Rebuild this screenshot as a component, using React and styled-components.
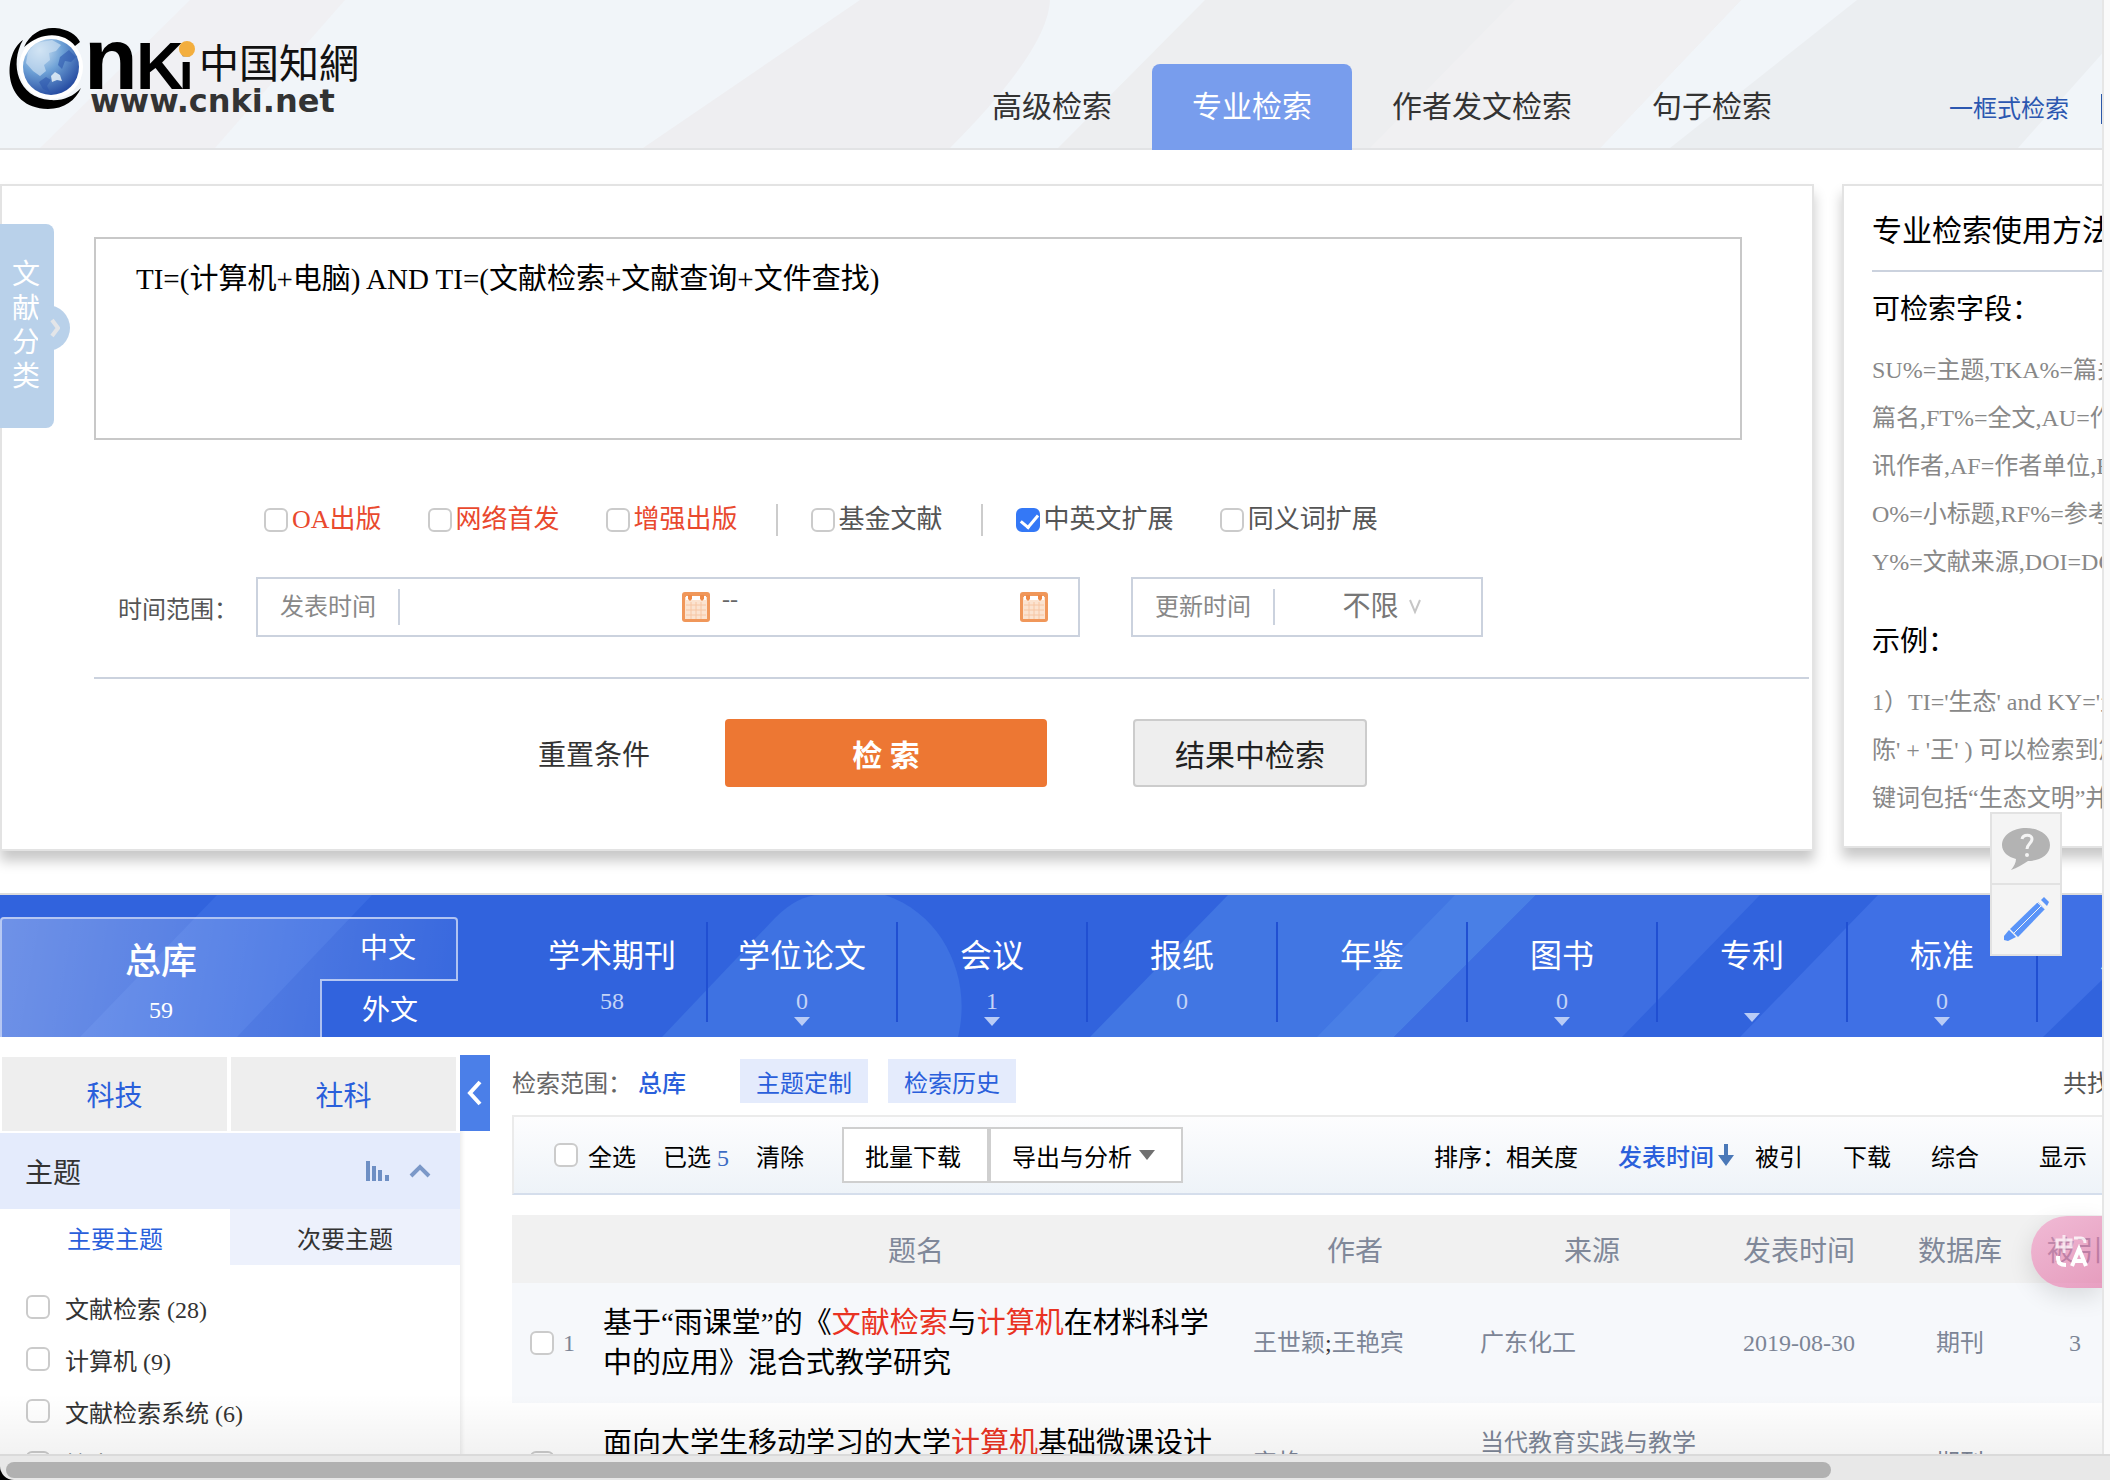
import React from 'react';
import styled, { createGlobalStyle } from 'styled-components';

const navItems = [
  { name: '学术期刊', count: '58' },
  { name: '学位论文', count: '0', more: true },
  { name: '会议', count: '1', more: true },
  { name: '报纸', count: '0' },
  { name: '年鉴', count: '' },
  { name: '图书', count: '0', more: true },
  { name: '专利', count: '', more: true },
  { name: '标准', count: '0', more: true },
  { name: '成果', count: '' },
];

const topics = ['文献检索 (28)', '计算机 (9)', '文献检索系统 (6)', '检索课 (5)'];

const fieldLines = [
  'SU%=主题,TKA%=篇关摘,KY=关键词,TI=',
  '篇名,FT%=全文,AU=作者,FI=第一作者,RP=通',
  '讯作者,AF=作者单位,FU=基金,AB=摘要,C',
  'O%=小标题,RF%=参考文献,CLC=分类号,L',
  'Y%=文献来源,DOI=DOI,CF=被引频次',
];

const exampleLines = [
  "1）TI='生态' and KY='生态文明' and (AU % '",
  "陈' + '王' ) 可以检索到篇名包括“生态”并且关",
  '键词包括“生态文明”并且作者为“陈”姓和“王”姓',
];

export default function App() {
  return (
    <>
      <GlobalStyle />
      <Window>
        <Body>
          <View>
            <Page>
              <TopBar />
              <SearchArea />
              <DatabaseNav />
              <Lower>
                <TopicSidebar />
                <Collapse type="button" aria-label="收起">
                  <svg width="18" height="26" viewBox="0 0 18 26" fill="none">
                    <path d="M14 2L4 13l10 11" stroke="#fff" strokeWidth="4" />
                  </svg>
                </Collapse>
                <Results />
              </Lower>
            </Page>
            <BottomShade />
            <FloatTools />
            <TranslateBadge />
          </View>
          <Track />
        </Body>
        <ScrollBar>
          <Thumb />
        </ScrollBar>
      </Window>
    </>
  );
}

function TopBar() {
  return (
    <Header>
      <HeaderArt viewBox="0 0 2412 148" preserveAspectRatio="xMinYMin slice">
        <path d="M190 0H345L215 148H40z" fill="#f0f0f3" />
        <path d="M860 0H1050Q1048 50 950 148H643z" fill="#eeeef1" />
        <path d="M1205 0H1741L1600 148H1058z" fill="#edeef0" />
        <path d="M1515 0H1741L1600 148H1370z" fill="#f0f0f2" />
        <path d="M1857 0H2150L2018 148H1670z" fill="#ebeef1" />
      </HeaderArt>
      <Logo />
      <TopNav>
        <TopTab href="#">高级检索</TopTab>
        <TopTab href="#" $active>专业检索</TopTab>
        <TopTab href="#">作者发文检索</TopTab>
        <TopTab href="#">句子检索</TopTab>
      </TopNav>
      <SimpleLink href="#">一框式检索</SimpleLink>
    </Header>
  );
}

function Logo() {
  return (
    <LogoSvg width="364" height="92" viewBox="0 0 364 92" role="img" aria-label="中国知网">
      <defs>
        <radialGradient id="globe" cx="0.3" cy="0.2" r="0.9">
          <stop offset="0" stopColor="#d5e8f6" />
          <stop offset="0.45" stopColor="#6ea1d6" />
          <stop offset="1" stopColor="#1d419b" />
        </radialGradient>
      </defs>
      <circle cx="51" cy="47" r="32" fill="#fff" />
      <circle cx="51" cy="47" r="28" fill="url(#globe)" />
      <path
        d="M28 32l8-9 16-3 9 5-5 6-7 2 1 7-6 5 2 6-6 5-7-5-7-8z"
        fill="#cfe2f3"
        opacity="0.65"
      />
      <path d="M60 37l9-7 7 7-5 5-6-1-3 8-4-4zM39 62l7-5 5 3-4 6 3 6-7-3z" fill="#2d56ad" opacity="0.6" />
      <path d="M51 56l4-4 5 3 2 6-5-1-5 2z" fill="#e6f1f8" opacity="0.85" />
      <path
        d="M23 20C3 33 1 88 48 89C64 89 76 80 81 68C73 77 62 81 50 80C18 78 9 44 23 20z"
        fill="#000"
      />
      <path d="M24 27C30 13 43 7 55 8C68 9 77 15 80 22L75 26C65 13 43 10 24 27z" fill="#000" />
      <LogoLatin x="84" y="69" fontSize="88">n</LogoLatin>
      <LogoLatin x="136" y="69" fontSize="66" $narrow>K</LogoLatin>
      <LogoLatin x="179" y="69" fontSize="52">i</LogoLatin>
      <circle cx="187" cy="29" r="8" fill="#f3ae3d" />
      <LogoChinese x="199" y="58" fontSize="40">中国知網</LogoChinese>
      <LogoUrl x="90" y="92" fontSize="32">www.cnki.net</LogoUrl>
    </LogoSvg>
  );
}

function SearchArea() {
  return (
    <SearchWrap>
      <SearchPanel>
        <CategoryTab type="button">
          {['文', '献', '分', '类'].map((c) => (
            <span key={c}>{c}</span>
          ))}
          <CategoryKnob>
            <svg width="10" height="20" viewBox="0 0 10 20" fill="none">
              <path d="M2 2l6 8-6 8" stroke="#e3e5e8" strokeWidth="4" />
            </svg>
          </CategoryKnob>
        </CategoryTab>
        <QueryBox
          aria-label="检索式"
          defaultValue="TI=(计算机+电脑) AND TI=(文献检索+文献查询+文件查找)"
          spellCheck={false}
        />
        <Options>
          <Option $red><Check type="checkbox" />OA出版</Option>
          <Option $red><Check type="checkbox" />网络首发</Option>
          <Option $red><Check type="checkbox" />增强出版</Option>
          <Split />
          <Option><Check type="checkbox" />基金文献</Option>
          <Split />
          <Option><Check type="checkbox" defaultChecked />中英文扩展</Option>
          <Option><Check type="checkbox" />同义词扩展</Option>
        </Options>
        <TimeRow>
          <TimeTitle>时间范围：</TimeTitle>
          <DateGroup>
            <GroupLabel htmlFor="date-from">发表时间</GroupLabel>
            <DateInput id="date-from" type="text" />
            <CalendarIcon />
            <Dash>--</Dash>
            <DateInput type="text" aria-label="结束时间" />
            <CalendarIcon />
          </DateGroup>
          <UpdateGroup>
            <GroupLabel htmlFor="update-time">更新时间</GroupLabel>
            <SelectWrap>
              <UpdateSelect id="update-time">
                <option>不限</option>
              </UpdateSelect>
              <svg width="14" height="16" viewBox="0 0 14 16" fill="none">
                <path d="M2 1l5 12 5-12" stroke="#c6c6c6" strokeWidth="2" />
              </svg>
            </SelectWrap>
          </UpdateGroup>
        </TimeRow>
        <Rule />
        <Actions>
          <ResetButton type="button">重置条件</ResetButton>
          <SearchButton type="button">检 索</SearchButton>
          <WithinButton type="button">结果中检索</WithinButton>
        </Actions>
      </SearchPanel>
      <HelpPanel>
        <HelpTitle>专业检索使用方法：</HelpTitle>
        <HelpHeading>可检索字段：</HelpHeading>
        <HelpText>
          {fieldLines.map((line) => (
            <HelpLine key={line}>{line}</HelpLine>
          ))}
        </HelpText>
        <HelpHeading>示例：</HelpHeading>
        <HelpText>
          {exampleLines.map((line) => (
            <HelpLine key={line}>{line}</HelpLine>
          ))}
        </HelpText>
      </HelpPanel>
    </SearchWrap>
  );
}

function CalendarIcon() {
  return (
    <svg width="28" height="30" viewBox="0 0 28 30">
      <rect width="28" height="30" rx="3" fill="#f0975a" />
      <rect x="3" y="5" width="22" height="22" fill="#fbe3d0" />
      <path d="M4 4h20v4H4z" fill="#fff" />
      <path d="M6 3h4v4L8 9 6 7zM18 3h4v4l-2 2-2-2z" fill="#ee8a48" />
      <path d="M4 13h20M4 18h20M4 23h20M9 10v17M14 10v17M19 10v17" stroke="#f6c6a4" strokeWidth="1" />
    </svg>
  );
}

function DatabaseNav() {
  return (
    <DbNav>
      <DbArt viewBox="0 0 2412 142" preserveAspectRatio="xMinYMin slice">
        <path d="M217 0H372L237 142H80z" fill="#3a6ce2" />
        <path d="M662 142L775 23Q798 0 820 0H885C945 20 972 85 958 142z" fill="#3e72e2" />
        <path d="M1228 0H1536L1394 142H1090z" fill="#4176e3" />
        <path d="M1455 0H1536L1394 142H1317z" fill="#497fe6" />
        <path d="M1536 0H1760L1622 142H1394z" fill="#3d6ee2" />
        <path d="M1878 0H2190L2043 142H1740z" fill="#3f70e5" />
      </DbArt>
      <TotalBox>
        <TotalMain href="#">
          <TotalName>总库</TotalName>
          <TotalCount>59</TotalCount>
        </TotalMain>
        <LangCol>
          <LangLink href="#" $on>中文</LangLink>
          <LangLink href="#">外文</LangLink>
        </LangCol>
      </TotalBox>
      <DbList>
        {navItems.map((item) => (
          <DbItem href="#" key={item.name}>
            <DbName>{item.name}</DbName>
            <DbCount>{item.count}</DbCount>
            {item.more && <DbArrow />}
          </DbItem>
        ))}
      </DbList>
    </DbNav>
  );
}

function TopicSidebar() {
  return (
    <Aside>
      <Subjects>
        <SubjectButton type="button">科技</SubjectButton>
        <SubjectButton type="button">社科</SubjectButton>
      </Subjects>
      <GroupHead>
        <GroupName>主题</GroupName>
        <svg width="24" height="20" viewBox="0 0 24 20" fill="#6e8fc4">
          <path d="M0 0h4v20H0zM6 5h4v15H6zM12 9h4v11h-4zM19 14h4v6h-4z" />
        </svg>
        <svg width="22" height="14" viewBox="0 0 22 14" fill="none">
          <path d="M2 12l9-9 9 9" stroke="#7b98c8" strokeWidth="4" />
        </svg>
      </GroupHead>
      <TopicTabs>
        <TopicTab type="button" $active>主要主题</TopicTab>
        <TopicTab type="button">次要主题</TopicTab>
      </TopicTabs>
      <TopicList>
        {topics.map((topic) => (
          <TopicItem key={topic}>
            <Check type="checkbox" />
            {topic}
          </TopicItem>
        ))}
      </TopicList>
    </Aside>
  );
}

function Results() {
  return (
    <Main>
      <ScopeRow>
        <ScopeLabel>检索范围：</ScopeLabel>
        <ScopeValue>总库</ScopeValue>
        <Chip type="button">主题定制</Chip>
        <Chip type="button">检索历史</Chip>
        <Found>共找到 59 条结果</Found>
      </ScopeRow>
      <Toolbar>
        <SelectAll><Check type="checkbox" />全选</SelectAll>
        <Picked>已选 <PickedCount>5</PickedCount></Picked>
        <PlainButton type="button">清除</PlainButton>
        <BatchGroup>
          <BatchButton type="button">批量下载</BatchButton>
          <BatchButton type="button">
            导出与分析
            <svg width="16" height="10" viewBox="0 0 16 10" fill="#707070">
              <path d="M0 0h16L8 10z" />
            </svg>
          </BatchButton>
        </BatchGroup>
        <Sorts>
          <span>排序：</span>
          <PlainButton type="button">相关度</PlainButton>
          <SortActive type="button">
            发表时间
            <svg width="16" height="22" viewBox="0 0 16 22" fill="#4a78b8">
              <path d="M6 0h4v11h6l-8 11-8-11h6z" />
            </svg>
          </SortActive>
          <PlainButton type="button">被引</PlainButton>
          <PlainButton type="button">下载</PlainButton>
          <PlainButton type="button">综合</PlainButton>
          <ShowCount>显示<span>20</span></ShowCount>
        </Sorts>
      </Toolbar>
      <Table>
        <colgroup>
          <Col $w={81} />
          <Col $w={646} />
          <Col $w={232} />
          <Col $w={242} />
          <Col $w={172} />
          <Col $w={150} />
          <Col $w={80} />
          <col />
        </colgroup>
        <thead>
          <tr>
            <Th />
            <Th>题名</Th>
            <Th>作者</Th>
            <Th>来源</Th>
            <Th>发表时间</Th>
            <Th>数据库</Th>
            <Th>被引</Th>
            <Th>下载</Th>
          </tr>
        </thead>
        <tbody>
          <Row $tint>
            <NumCell><RowLabel><Check type="checkbox" />1</RowLabel></NumCell>
            <TitleCell>
              <TitleLink href="#">
                基于“雨课堂”的《<Hit>文献检索</Hit>与<Hit>计算机</Hit>在材料科学中的应用》混合式教学研究
              </TitleLink>
            </TitleCell>
            <AuthorCell>王世颖<Semi>;</Semi>王艳宾</AuthorCell>
            <SourceCell>广东化工</SourceCell>
            <Cell>2019-08-30</Cell>
            <Cell>期刊</Cell>
            <Cell>3</Cell>
            <Cell />
          </Row>
          <Row>
            <NumCell><RowLabel><Check type="checkbox" /></RowLabel></NumCell>
            <TitleCell>
              <TitleLink href="#">
                面向大学生移动学习的大学<Hit>计算机</Hit>基础微课设计与应用
              </TitleLink>
            </TitleCell>
            <AuthorCell>宋艳</AuthorCell>
            <SourceCell>当代教育实践与教学研究</SourceCell>
            <Cell />
            <Cell>期刊</Cell>
            <Cell />
            <Cell />
          </Row>
        </tbody>
      </Table>
    </Main>
  );
}

function FloatTools() {
  return (
    <Tools>
      <ToolButton type="button" aria-label="帮助">
        <svg width="48" height="44" viewBox="0 0 48 44">
          <path
            d="M24 1C37 1 48 8 48 18S38 34 26 34C21 37 15 41 9 43c3-4 5-7 5-11C6 30 0 25 0 18 0 8 11 1 24 1z"
            fill="#b3b3b3"
          />
          <path
            d="M20 12c1-5 10-5 10 0 0 4-5 5-5 10"
            stroke="#f4f4f4"
            strokeWidth="3"
            fill="none"
          />
          <circle cx="25" cy="28" r="2" fill="#f4f4f4" />
        </svg>
      </ToolButton>
      <ToolButton type="button" aria-label="反馈">
        <svg width="48" height="48" viewBox="0 0 48 48">
          <path d="M36 6l7 7-27 28-8-8z" fill="#5a94f8" />
          <path d="M39 4l3-3 5 5-2 4z" fill="#5a94f8" />
          <path d="M7 34l7 7-8 4-4-1 0-4z" fill="#5a94f8" />
          <path d="M39 10L12 37M35 6l9 8" stroke="#f4f4f4" strokeWidth="1" />
        </svg>
      </ToolButton>
    </Tools>
  );
}

function TranslateBadge() {
  return (
    <Badge type="button" aria-label="翻译">
      <svg width="36" height="36" viewBox="0 0 36 36" fill="none" stroke="#fff" strokeWidth="3">
        <path d="M3 6h14v7H3zM10 1v18" opacity="0.7" />
        <path d="M20 4h7q4 0 4 5" opacity="0.8" />
        <path d="M4 22v3q0 6 8 6" strokeWidth="4" />
        <path d="M18 32l7-17 7 17M20 27h10" strokeWidth="4" />
      </svg>
    </Badge>
  );
}

const GlobalStyle = createGlobalStyle`
  * {
    box-sizing: border-box;
  }
  body {
    margin: 0;
    background: #fff;
    overflow: hidden;
  }
  body, button, input, select, textarea {
    font-family: "Liberation Serif", "Noto Sans CJK SC", serif;
    font-size: 24px;
  }
  button {
    padding: 0;
    border: none;
    background: none;
    color: inherit;
    cursor: pointer;
  }
  a {
    color: inherit;
    text-decoration: none;
  }
`;
const Window = styled.div`
  height: 100vh;
  display: flex;
  flex-direction: column;
  background: #fff;
`;
const Body = styled.div`
  flex: 1;
  min-height: 0;
  display: flex;
`;
const View = styled.div`
  flex: 1;
  min-width: 0;
  position: relative;
  overflow: hidden;
`;
const Page = styled.div`
  min-width: 2412px;
`;
const Track = styled.div`
  width: 8px;
  border-left: 2px solid #e6e6e6;
  background: #fafafa;
`;
const ScrollBar = styled.div`
  height: 26px;
  padding: 6px 6px 2px;
  border-top: 2px solid #dadada;
  border-bottom-left-radius: 14px;
  background: #e8e8e8;
  box-shadow: -8px 8px 0 8px #000;
`;
const Thumb = styled.div`
  width: 87%;
  height: 16px;
  border-radius: 8px;
  background: #b1b1b1;
`;
const BottomShade = styled.div`
  position: absolute;
  left: 0;
  right: 0;
  bottom: 0;
  height: 60px;
  pointer-events: none;
  background: linear-gradient(rgba(0, 0, 0, 0), rgba(0, 0, 0, 0.05));
`;

/* header */
const Header = styled.header`
  position: relative;
  height: 150px;
  display: flex;
  align-items: flex-end;
  background: #f1f5f9;
`;
const HeaderArt = styled.svg`
  position: absolute;
  left: 0;
  top: 0;
  width: 100%;
  height: 150px;
  border-bottom: 2px solid #e2e3e5;
`;
const LogoSvg = styled.svg`
  position: relative;
  align-self: flex-start;
  margin-top: 20px;
  overflow: visible;
`;
const LogoLatin = styled.text`
  font-family: ${(p) => (p.$narrow ? '"Liberation Sans Narrow", ' : '')}"Liberation Sans", sans-serif;
  font-weight: 700;
`;
const LogoChinese = styled.text`
  font-family: "Noto Sans CJK SC", sans-serif;
  fill: #111;
`;
const LogoUrl = styled.text`
  font-family: "DejaVu Sans", sans-serif;
  font-weight: 700;
  fill: #333;
`;
const TopNav = styled.nav`
  position: relative;
  display: flex;
  margin-left: 588px;
`;
const TopTab = styled.a`
  height: 86px;
  padding: 0 40px;
  border-radius: 8px 8px 0 0;
  font-size: 30px;
  line-height: 86px;
  color: ${(p) => (p.$active ? '#fff' : '#333')};
  background: ${(p) => (p.$active ? '#789ded' : 'none')};
`;
const SimpleLink = styled.a`
  position: relative;
  margin: 0 0 26px 137px;
  padding-right: 32px;
  border-right: 2px solid #2b57a8;
  font-size: 24px;
  line-height: 30px;
  color: #2b57b0;
`;

/* search form */
const SearchWrap = styled.section`
  display: flex;
  gap: 28px;
  padding: 34px 0 42px;
`;
const panelShadow = '0 10px 12px rgba(0, 0, 0, 0.22)';
const SearchPanel = styled.form`
  position: relative;
  flex: 1;
  padding: 51px 3px 60px 92px;
  border: 2px solid #e3e3e3;
  box-shadow: ${panelShadow};
`;
const CategoryTab = styled.button`
  position: absolute;
  left: -2px;
  top: 38px;
  width: 54px;
  height: 204px;
  padding-right: 2px;
  display: flex;
  flex-direction: column;
  align-items: center;
  justify-content: center;
  border-radius: 0 8px 8px 0;
  background: #b9d1ea;
  color: #fff;
  font-size: 28px;
  line-height: 34px;
`;
const CategoryKnob = styled.span`
  position: absolute;
  right: -16px;
  top: 81px;
  width: 32px;
  height: 46px;
  padding-left: 12px;
  display: flex;
  align-items: center;
  border-radius: 0 24px 24px 0;
  background: #b9d1ea;
`;
const QueryBox = styled.textarea`
  display: block;
  width: calc(100% - 67px);
  height: 203px;
  padding: 20px 40px;
  border: 2px solid #c8c8c8;
  outline: none;
  resize: none;
  font-size: 29px;
  line-height: 40px;
  color: #000;
`;
const Options = styled.div`
  display: flex;
  align-items: center;
  margin: 64px 0 0 170px;
  height: 32px;
`;
const Option = styled.label`
  display: flex;
  align-items: center;
  gap: 4px;
  font-size: 26px;
  line-height: 32px;
  color: ${(p) => (p.$red ? '#e9492e' : '#555')};
  & + & {
    margin-left: 46px;
  }
`;
const Check = styled.input`
  position: relative;
  flex: none;
  appearance: none;
  width: 24px;
  height: 24px;
  margin: 0;
  border: 2px solid #cbcbcb;
  border-radius: 6px;
  background: #fff;
  &:checked {
    border-color: #3478f6;
    background: #3478f6;
  }
  &:checked::after {
    content: '';
    position: absolute;
    left: 6px;
    top: 1px;
    width: 8px;
    height: 14px;
    border: solid #fff;
    border-width: 0 3px 3px 0;
    transform: rotate(40deg);
  }
`;
const Split = styled.span`
  width: 2px;
  height: 32px;
  margin: 0 33px 0 38px;
  background: #ccc;
`;
const TimeRow = styled.div`
  display: flex;
  align-items: center;
  margin: 41px 0 40px 24px;
`;
const TimeTitle = styled.span`
  width: 138px;
  color: #555;
`;
const TimeGroup = styled.div`
  display: flex;
  align-items: center;
  height: 60px;
  border: 2px solid #cbd2de;
`;
const DateGroup = styled(TimeGroup)`
  width: 824px;
  padding-right: 30px;
`;
const UpdateGroup = styled(TimeGroup)`
  width: 352px;
  margin-left: 51px;
`;
const GroupLabel = styled.label`
  flex: none;
  width: 142px;
  padding-left: 22px;
  border-right: 2px solid #cbd2de;
  line-height: 36px;
  color: #888;
`;
const DateInput = styled.input`
  flex: 1;
  min-width: 0;
  height: 40px;
  padding: 0 20px;
  border: none;
  outline: none;
  background: none;
`;
const Dash = styled.span`
  padding: 0 0 16px 12px;
  color: #666;
`;
const SelectWrap = styled.div`
  flex: 1;
  display: flex;
  align-items: center;
  justify-content: center;
  gap: 8px;
  padding-left: 8px;
`;
const UpdateSelect = styled.select`
  appearance: none;
  padding: 0;
  border: none;
  outline: none;
  background: none;
  font-size: 28px;
  line-height: 40px;
  color: #777;
`;
const Rule = styled.div`
  height: 2px;
  background: #cbd2de;
`;
const Actions = styled.div`
  display: flex;
  align-items: center;
  margin: 40px 0 2px 444px;
  height: 68px;
`;
const ResetButton = styled.button`
  font-size: 28px;
  color: #333;
`;
const SearchButton = styled.button`
  width: 322px;
  height: 68px;
  margin: 0 86px 0 75px;
  border-radius: 4px;
  background: #ed7733;
  font-size: 30px;
  font-weight: 700;
  color: #fff;
`;
const WithinButton = styled.button`
  width: 234px;
  height: 68px;
  border: 2px solid #ccc;
  border-radius: 4px;
  background: #eee;
  font-size: 30px;
  color: #222;
`;
const HelpPanel = styled.section`
  width: 570px;
  margin-bottom: 3px;
  padding: 20px 28px;
  border: 2px solid #e3e3e3;
  box-shadow: ${panelShadow};
`;
const HelpTitle = styled.h2`
  margin: 0;
  padding-bottom: 14px;
  border-bottom: 2px solid #cbd2de;
  font-size: 30px;
  font-weight: 400;
  line-height: 50px;
`;
const HelpHeading = styled.h3`
  margin: 18px 0 16px;
  font-size: 28px;
  font-weight: 400;
  line-height: 40px;
`;
const HelpText = styled.div`
  margin-bottom: 36px;
  color: #888;
  &:last-child {
    margin-bottom: 0;
  }
`;
const HelpLine = styled.div`
  line-height: 48px;
  white-space: nowrap;
`;

/* database nav */
const DbNav = styled.nav`
  position: relative;
  height: 144px;
  display: flex;
  border-top: 2px solid #dcdcdc;
  background: #3163dd;
  color: #fff;
  overflow: hidden;
`;
const DbArt = styled.svg`
  position: absolute;
  left: 0;
  top: 0;
  width: 100%;
  height: 142px;
`;
const TotalBox = styled.div`
  position: relative;
  width: 458px;
  margin-top: 22px;
  display: flex;
  border-radius: 4px 4px 0 0;
  background: linear-gradient(100deg, rgba(255, 255, 255, 0.3), rgba(255, 255, 255, 0.03));
`;
const TotalMain = styled.a`
  flex: 1;
  display: flex;
  flex-direction: column;
  align-items: center;
  padding-top: 18px;
  border: solid rgba(255, 255, 255, 0.5);
  border-width: 2px 0 0 2px;
  border-top-left-radius: 4px;
`;
const TotalName = styled.span`
  font-size: 36px;
  font-weight: 500;
  line-height: 50px;
`;
const TotalCount = styled.span`
  font-size: 24px;
  line-height: 46px;
`;
const LangCol = styled.div`
  width: 138px;
  display: flex;
  flex-direction: column;
`;
const LangLink = styled.a`
  flex: 1;
  border: solid rgba(255, 255, 255, 0.6);
  border-width: ${(p) => (p.$on ? '2px 2px 2px 0' : '0 0 0 2px')};
  border-top-right-radius: ${(p) => (p.$on ? '4px' : '0')};
  background: ${(p) => (p.$on ? 'none' : '#3163dd')};
  font-size: 28px;
  line-height: 60px;
  text-align: center;
`;
const DbList = styled.div`
  position: relative;
  display: flex;
  margin-left: 60px;
  padding-top: 27px;
`;
const DbItem = styled.a`
  width: 190px;
  height: 100px;
  display: flex;
  flex-direction: column;
  align-items: center;
  padding-top: 12px;
  border-right: 2px solid #204fd2;
`;
const DbName = styled.span`
  font-size: 32px;
  line-height: 44px;
`;
const DbCount = styled.span`
  height: 39px;
  font-size: 24px;
  line-height: 46px;
  color: #c4d3f7;
`;
const DbArrow = styled.span`
  border: solid transparent;
  border-width: 9px 8px 0;
  border-top-color: #b9ccf6;
`;

/* lower area */
const Lower = styled.div`
  display: flex;
  align-items: flex-start;
`;
const Aside = styled.aside`
  width: 460px;
  padding-top: 20px;
  box-shadow: 2px 22px 4px rgba(0, 0, 0, 0.08);
`;
const Subjects = styled.div`
  display: flex;
  gap: 4px;
  padding: 0 4px 2px 2px;
`;
const SubjectButton = styled.button`
  flex: 1;
  height: 74px;
  background: #eee;
  font-size: 28px;
  color: #2a5fdb;
`;
const GroupHead = styled.div`
  height: 76px;
  display: flex;
  align-items: center;
  gap: 19px;
  padding: 0 29px 0 25px;
  background: #e4ebfc;
`;
const GroupName = styled.h3`
  flex: 1;
  margin: 0;
  font-size: 28px;
  font-weight: 400;
  color: #333;
`;
const TopicTabs = styled.div`
  display: flex;
`;
const TopicTab = styled.button`
  flex: 1;
  height: 56px;
  color: ${(p) => (p.$active ? '#2a5fdb' : '#333')};
  background: ${(p) => (p.$active ? '#fff' : '#edf1fc')};
`;
const TopicList = styled.div`
  padding: 16px 26px;
`;
const TopicItem = styled.label`
  height: 52px;
  display: flex;
  align-items: center;
  gap: 15px;
  color: #333;
`;
const Collapse = styled.button`
  width: 30px;
  height: 76px;
  margin-top: 18px;
  display: flex;
  align-items: center;
  justify-content: center;
  background: #4b7fe8;
`;
const Main = styled.main`
  flex: 1;
  margin-left: 22px;
`;
const ScopeRow = styled.div`
  display: flex;
  align-items: center;
  height: 44px;
  margin: 22px 0 12px;
`;
const ScopeLabel = styled.span`
  width: 126px;
  color: #666;
`;
const ScopeValue = styled.span`
  margin-right: 54px;
  font-weight: 500;
  color: #2a5fdb;
`;
const Chip = styled.button`
  width: 128px;
  height: 44px;
  margin-right: 20px;
  background: #e4ebfc;
  color: #2a5fdb;
`;
const Found = styled.span`
  width: 349px;
  margin-left: auto;
  color: #555;
`;
const Toolbar = styled.div`
  height: 80px;
  display: flex;
  align-items: center;
  padding-left: 40px;
  border: solid #ebebeb;
  border-width: 2px 0 2px 2px;
  border-bottom-color: #d5deec;
  background: linear-gradient(#fdfdfe, #eef3f8);
`;
const SelectAll = styled.label`
  display: flex;
  align-items: center;
  gap: 10px;
`;
const Picked = styled.span`
  margin: 0 27px;
`;
const PickedCount = styled.span`
  color: #3d6cc4;
`;
const PlainButton = styled.button`
  color: #000;
`;
const BatchGroup = styled.div`
  display: flex;
  margin-left: 38px;
`;
const BatchButton = styled.button`
  height: 56px;
  padding: 0 26px 0 21px;
  display: flex;
  align-items: center;
  gap: 7px;
  border: 2px solid #cfcfcf;
  background: #fff;
  color: #000;
`;
const Sorts = styled.div`
  width: 978px;
  margin-left: auto;
  display: flex;
  align-items: center;
  gap: 40px;
  & > span:first-child {
    margin-right: -40px;
  }
`;
const SortActive = styled.button`
  display: flex;
  align-items: center;
  gap: 4px;
  margin-right: -19px;
  font-weight: 500;
  color: #2a5fdb;
`;
const ShowCount = styled.span`
  display: flex;
  gap: 24px;
  margin-left: 20px;
`;

/* result table */
const Table = styled.table`
  width: 100%;
  margin-top: 20px;
  border-collapse: collapse;
  table-layout: fixed;
`;
const Col = styled.col`
  width: ${(p) => p.$w}px;
`;
const Th = styled.th`
  height: 68px;
  padding: 0;
  background: #f1f1f1;
  font-size: 28px;
  font-weight: 400;
  color: #808899;
`;
const Row = styled.tr`
  background: ${(p) => (p.$tint ? '#f6f8fb' : '#fff')};
`;
const Cell = styled.td`
  height: 120px;
  padding: 0;
  line-height: 40px;
  text-align: center;
  color: #7c8596;
`;
const NumCell = styled(Cell)`
  padding-left: 18px;
`;
const RowLabel = styled.label`
  display: flex;
  align-items: center;
  gap: 9px;
`;
const TitleCell = styled(Cell)`
  padding: 0 20px 0 10px;
  text-align: left;
`;
const TitleLink = styled.a`
  display: block;
  font-size: 29px;
  color: #000;
`;
const Hit = styled.em`
  font-style: normal;
  color: #e93323;
`;
const AuthorCell = styled(Cell)`
  padding: 0 14px;
  text-align: left;
`;
const Semi = styled.span`
  color: #333;
`;
const SourceCell = styled(Cell)`
  padding: 0 14px 0 9px;
  text-align: left;
`;

/* floating tools */
const Tools = styled.div`
  position: absolute;
  top: 812px;
  right: 40px;
  border: 2px solid #e2e2e2;
  background: #e2e2e2;
  display: flex;
  flex-direction: column;
  gap: 2px;
`;
const ToolButton = styled.button`
  width: 68px;
  height: 69px;
  display: flex;
  align-items: center;
  justify-content: center;
  background: #f4f4f4;
`;
const Badge = styled.button`
  position: absolute;
  top: 1216px;
  right: 0;
  width: 71px;
  height: 72px;
  padding-left: 23px;
  display: flex;
  align-items: center;
  border-radius: 36px 0 0 36px;
  background: linear-gradient(150deg, rgba(240, 150, 195, 0.6), rgba(222, 100, 155, 0.6));
  box-shadow: 0 8px 24px rgba(0, 0, 0, 0.12);
`;
